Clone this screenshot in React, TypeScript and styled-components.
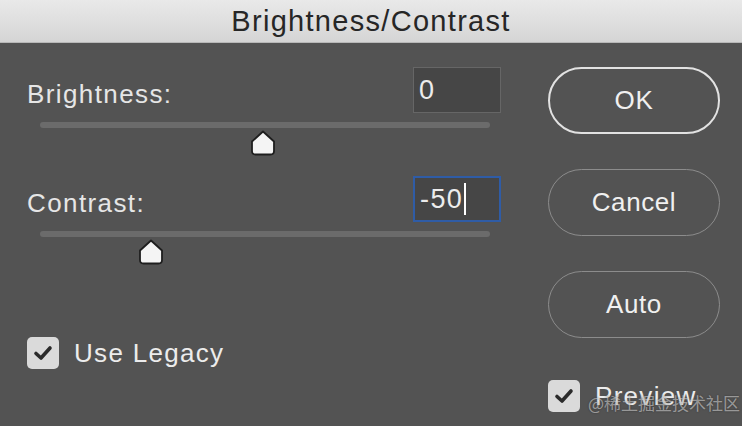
import styled, { createGlobalStyle } from 'styled-components';

const GlobalStyle = createGlobalStyle`
  html, body {
    margin: 0;
    padding: 0;
    background: #535353;
  }
  body {
    font-family: "Liberation Sans", Arial, sans-serif;
  }
`;

const Check = () => (
    <svg width="20" height="16" viewBox="0 0 20 16">
        <path d="M3 8.5 L8 13 L17 3" fill="none" stroke="#2b2b2b" strokeWidth="3.6" strokeLinecap="round" strokeLinejoin="round" />
    </svg>
);

const Thumb = () => (
    <svg width="26" height="26" viewBox="0 0 26 26">
        <path d="M13 1.5 L24 11.5 L24 21 Q24 24.5 20.5 24.5 L5.5 24.5 Q2 24.5 2 21 L2 11.5 Z" fill="#f4f4f4" stroke="#1e1e1e" strokeWidth="1.8" strokeLinejoin="round" />
    </svg>
);

export default function App() {
    return (
        <Dialog>
            <GlobalStyle />
            <TitleBar>Brightness/Contrast</TitleBar>
            <Body>
                <LeftColumn>
                    <Field>
                        <Label>Brightness:</Label>
                        <ValueBox>0</ValueBox>
                    </Field>
                    <Slider>
                        <Track />
                        <ThumbHolder style={{ left: '49.6%' }}><Thumb /></ThumbHolder>
                    </Slider>
                    <Field>
                        <Label>Contrast:</Label>
                        <ValueBox $focused>-50<Caret /></ValueBox>
                    </Field>
                    <Slider>
                        <Track />
                        <ThumbHolder style={{ left: '24.7%' }}><Thumb /></ThumbHolder>
                    </Slider>
                    <CheckRow $offset={52}>
                        <CheckBox><Check /></CheckBox>
                        <CheckText>Use Legacy</CheckText>
                    </CheckRow>
                </LeftColumn>
                <RightColumn>
                    <Button $primary>OK</Button>
                    <Button>Cancel</Button>
                    <Button>Auto</Button>
                    <CheckRow $offset={7}>
                        <CheckBox><Check /></CheckBox>
                        <CheckText>Preview</CheckText>
                    </CheckRow>
                </RightColumn>
            </Body>
            <Watermark>@稀土掘金技术社区</Watermark>
        </Dialog>
    );
}

const Dialog = styled.div`
position: relative;
width: 742px;
height: 426px;
overflow: hidden;
background: #535353;
`;
const TitleBar = styled.div`
height: 43px;
box-sizing: border-box;
background: linear-gradient(#e9e9e9, #d5d5d5);
border-bottom: 1px solid #b8b8b8;
color: #262626;
font-size: 29px;
letter-spacing: 1.3px;
line-height: 42px;
text-align: center;
`;
const Body = styled.div`
display: flex;
justify-content: space-between;
padding: 24px 22px 0 27px;
`;
const LeftColumn = styled.div`
width: 474px;
display: flex;
flex-direction: column;
`;
const RightColumn = styled.div`
width: 172px;
display: flex;
flex-direction: column;
gap: 35px;
`;
const Field = styled.div`
display: flex;
justify-content: space-between;
align-items: center;
height: 46px;
`;
const Label = styled.span`
margin-top: 8px;
color: #e6e6e6;
font-size: 26px;
letter-spacing: 1.4px;
`;
const ValueBox = styled.div<{ $focused?: boolean }>`
width: 88px;
height: 46px;
box-sizing: border-box;
display: flex;
align-items: center;
padding-left: 5px;
background: #464646;
border: ${p => p.$focused ? '2px solid #2f5ca6' : '1px solid #666'};
color: #ececec;
font-size: 27px;
letter-spacing: 1.4px;
`;
const Caret = styled.span`
display: inline-block;
width: 2px;
height: 32px;
margin-left: 1px;
background: #fff;
`;
const Slider = styled.div`
position: relative;
height: 63px;
margin: 0 11px 0 13px;
padding-top: 9px;
box-sizing: border-box;
`;
const Track = styled.div`
height: 6px;
border-radius: 3px;
background: #6b6b6b;
`;
const ThumbHolder = styled.div`
position: absolute;
top: 17px;
margin-left: -13px;
line-height: 0;
`;
const Button = styled.div<{ $primary?: boolean }>`
height: 67px;
box-sizing: border-box;
border-radius: 34px;
border: ${p => p.$primary ? '2px solid #e2e2e2' : '1.5px solid #8c8c8c'};
display: flex;
align-items: center;
justify-content: center;
color: #f0f0f0;
font-size: 26px;
letter-spacing: 0.6px;
`;
const CheckRow = styled.div<{ $offset: number }>`
display: flex;
align-items: center;
gap: 15px;
margin-top: ${p => p.$offset}px;
`;
const CheckBox = styled.div`
width: 32px;
height: 32px;
border-radius: 5px;
background: #dadada;
display: flex;
align-items: center;
justify-content: center;
`;
const CheckText = styled.span`
color: #ececec;
font-size: 26px;
letter-spacing: 1.3px;
`;
const Watermark = styled.div`
position: absolute;
left: 588px;
top: 390px;
color: rgba(230, 230, 230, 0.55);
font-family: "Noto Sans CJK SC", sans-serif;
font-size: 17px;
text-shadow: 0 0 2px rgba(0,0,0,0.4);
`;
